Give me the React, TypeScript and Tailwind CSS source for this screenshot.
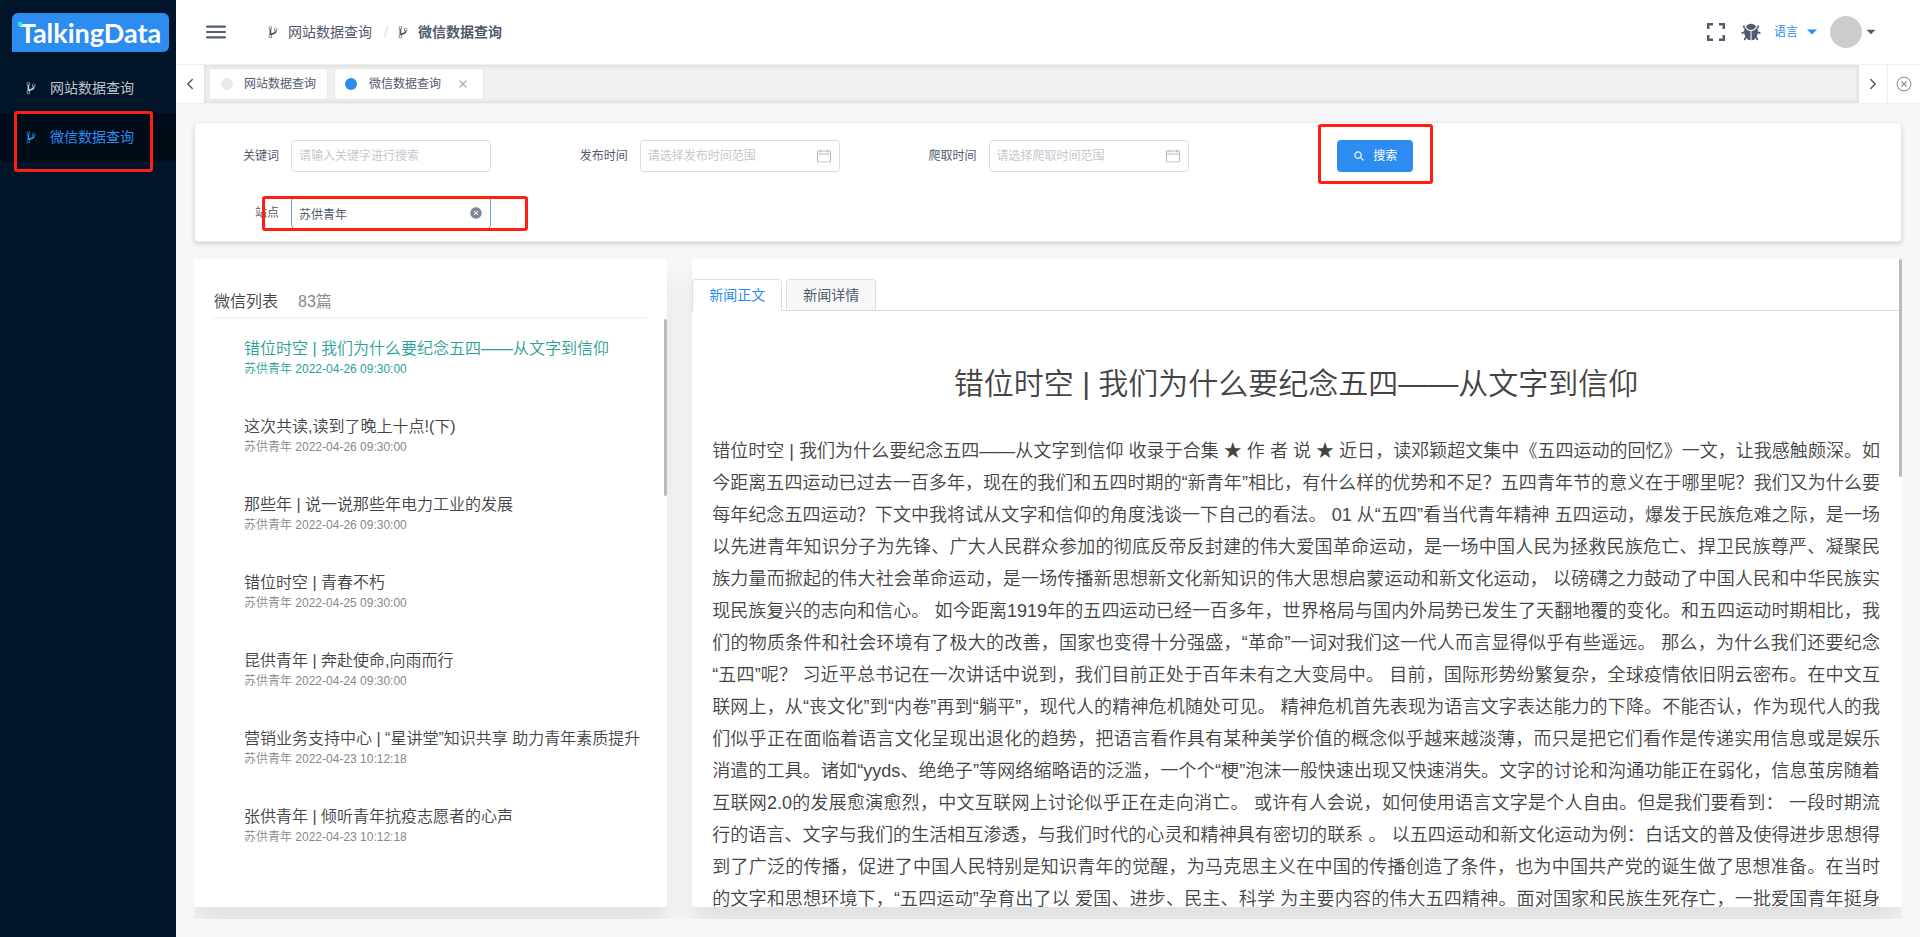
import { useState } from "react";
import {
    IoIosArrowBack,
    IoIosArrowForward,
    IoIosBug,
    IoIosCloseCircle,
    IoIosCloseCircleOutline,
    IoIosClose,
    IoIosSearch,
    IoMdArrowDropdown,
    IoMdExpand,
    IoMdGitBranch,
    IoMdMenu,
} from "react-icons/io";

const articles = [
    { title: "错位时空 | 我们为什么要纪念五四——从文字到信仰", time: "2022-04-26 09:30:00" },
    { title: "这次共读,读到了晚上十点!(下)", time: "2022-04-26 09:30:00" },
    { title: "那些年 | 说一说那些年电力工业的发展", time: "2022-04-26 09:30:00" },
    { title: "错位时空 | 青春不朽", time: "2022-04-25 09:30:00" },
    { title: "昆供青年 | 奔赴使命,向雨而行", time: "2022-04-24 09:30:00" },
    { title: "营销业务支持中心 | “星讲堂”知识共享 助力青年素质提升", time: "2022-04-23 10:12:18" },
    { title: "张供青年 | 倾听青年抗疫志愿者的心声", time: "2022-04-23 10:12:18" },
];

const content = [
    "错位时空 | 我们为什么要纪念五四——从文字到信仰 收录于合集 ★ 作 者 说 ★ 近日，读邓颖超文集中《五四运动的回忆》一文，让我感触颇深。如今距离五四运动已过去一百多年，现在的我们和五四时期的“新青年”相比，有什么样的优势和不足？五四青年节的意义在于哪里呢？我们又为什么要每年纪念五四运动？下文中我将试从文字和信仰的角度浅谈一下自己的看法。",
    "01 从“五四”看当代青年精神 五四运动，爆发于民族危难之际，是一场以先进青年知识分子为先锋、广大人民群众参加的彻底反帝反封建的伟大爱国革命运动，是一场中国人民为拯救民族危亡、捍卫民族尊严、凝聚民族力量而掀起的伟大社会革命运动，是一场传播新思想新文化新知识的伟大思想启蒙运动和新文化运动， 以磅礴之力鼓动了中国人民和中华民族实现民族复兴的志向和信心。",
    "如今距离1919年的五四运动已经一百多年，世界格局与国内外局势已发生了天翻地覆的变化。和五四运动时期相比，我们的物质条件和社会环境有了极大的改善，国家也变得十分强盛，“革命”一词对我们这一代人而言显得似乎有些遥远。",
    "那么，为什么我们还要纪念“五四”呢？ 习近平总书记在一次讲话中说到，我们目前正处于百年未有之大变局中。",
    "目前，国际形势纷繁复杂，全球疫情依旧阴云密布。在中文互联网上，从“丧文化”到“内卷”再到“躺平”，现代人的精神危机随处可见。",
    "精神危机首先表现为语言文字表达能力的下降。不能否认，作为现代人的我们似乎正在面临着语言文化呈现出退化的趋势，把语言看作具有某种美学价值的概念似乎越来越淡薄，而只是把它们看作是传递实用信息或是娱乐消遣的工具。诸如“yyds、绝绝子”等网络缩略语的泛滥，一个个“梗”泡沫一般快速出现又快速消失。文字的讨论和沟通功能正在弱化，信息茧房随着互联网2.0的发展愈演愈烈，中文互联网上讨论似乎正在走向消亡。",
    "或许有人会说，如何使用语言文字是个人自由。但是我们要看到： 一段时期流行的语言、文字与我们的生活相互渗透，与我们时代的心灵和精神具有密切的联系 。",
    "以五四运动和新文化运动为例：白话文的普及使得进步思想得到了广泛的传播，促进了中国人民特别是知识青年的觉醒，为马克思主义在中国的传播创造了条件，也为中国共产党的诞生做了思想准备。在当时的文字和思想环境下，“五四运动”孕育出了以 爱国、进步、民主、科学 为主要内容的伟大五四精神。面对国家和民族生死存亡，一批爱国青年挺身",
].join(" ");

function CalendarIcon() {
    return (
        <svg viewBox="0 0 14 13" className="h-[13px] w-[14px]" fill="none" stroke="currentColor">
            <path d="M.5 1.5h13v11H.5zM.5 4.5h13M3.5 0v3M10.5 0v3" />
        </svg>
    )
}

function Field({ id, label, placeholder, calendar }: { id: string; label: string; placeholder: string; calendar?: boolean }) {
    return (
        <div className="flex items-center">
            <label htmlFor={id} className="w-20 shrink-0 pr-3 text-right">{label}</label>
            <div className="relative w-[200px]">
                <input
                    id={id}
                    placeholder={placeholder}
                    className="block h-8 w-full rounded border border-[#dcdee2] bg-white px-[7px] outline-none placeholder:text-[#c5c8ce]"
                />
                {calendar && (
                    <span className="absolute top-1/2 right-[9px] -translate-y-1/2 text-[#b4b8c2]">
                        <CalendarIcon />
                    </span>
                )}
            </div>
        </div>
    )
}

function Sidebar() {
    return (
        <aside className="w-44 shrink-0 bg-[#001529]">
            <div className="flex h-16 pt-[13px] pl-3">
                <div className="relative flex h-[39px] w-[157px] items-center justify-center rounded-md rounded-bl-none bg-[#2d8cf0]">
                    <span className="absolute top-[9px] left-[6px] size-1 bg-[#2debc0]" />
                    <span className="font-['Lato',sans-serif] text-[27px] leading-none font-bold text-white">TalkingData</span>
                </div>
            </div>
            <nav className="text-sm">
                <a href="#site" className="flex h-[49px] items-center gap-3 pb-0.5 pl-6 text-white/75">
                    <IoMdGitBranch className="size-3.5" />
                    网站数据查询
                </a>
                <a href="#wechat" className="relative flex h-[49px] items-center gap-3 bg-[#000c17] pb-0.5 pl-6 text-[#2d8cf0]">
                    <IoMdGitBranch className="size-3.5" />
                    微信数据查询
                    <span className="absolute -top-0.5 left-3.5 h-[61px] w-[139px] rounded-[3px] border-3 border-[#ff1e0f]" />
                </a>
            </nav>
        </aside>
    )
}

function Header() {
    return (
        <header className="flex h-16 shrink-0 items-center justify-between bg-white pr-10 pl-[27px]">
            <div className="flex items-center">
                <button aria-label="菜单" className="mr-[37px]"><IoMdMenu className="size-[26px]" /></button>
                <nav className="flex items-center text-sm">
                    <a href="#site" className="flex items-center gap-2"><IoMdGitBranch className="size-3.5" />网站数据查询</a>
                    <span className="mr-2 ml-3 text-[#dcdee2]">/</span>
                    <a href="#wechat" className="flex items-center gap-2 font-bold"><IoMdGitBranch className="size-3.5" />微信数据查询</a>
                </nav>
            </div>
            <div className="flex items-center">
                <button aria-label="全屏"><IoMdExpand className="size-6" /></button>
                <button aria-label="错误日志" className="ml-3"><IoIosBug className="size-[22px]" /></button>
                <button className="ml-3 flex items-center gap-1 text-xs text-[#2d8cf0]">语言<IoMdArrowDropdown className="size-5" /></button>
                <button aria-label="用户" className="ml-2 flex items-center">
                    <span className="size-8 rounded-full bg-[#ccc]" />
                    <IoMdArrowDropdown className="size-[18px]" />
                </button>
            </div>
        </header>
    )
}

function TagsNav() {
    return (
        <div className="flex h-10 shrink-0 border-y border-[#f0f0f0] bg-white text-xs">
            <button aria-label="向左" className="flex w-7 items-center justify-center"><IoIosArrowBack className="size-4" /></button>
            <div className="flex flex-1 items-center gap-1.5 bg-[#f0f0f0] pl-[5px] shadow-[inset_0_0_3px_2px_rgba(100,100,100,0.1)]">
                <a href="#site" className="flex h-8 items-center rounded-[3px] border border-[#e8eaec] bg-white px-[11px]">
                    <span className="mr-[11px] size-3 rounded-full bg-[#e8eaec]" />
                    网站数据查询
                </a>
                <div className="flex h-8 items-center rounded-[3px] border border-[#e8eaec] bg-white px-[10px]">
                    <span className="mr-3 size-3 rounded-full bg-[#2d8cf0]" />
                    <a href="#wechat">微信数据查询</a>
                    <button aria-label="关闭" className="ml-3"><IoIosClose className="size-5 text-[#aaa]" /></button>
                </div>
            </div>
            <button aria-label="向右" className="flex w-7 items-center justify-center"><IoIosArrowForward className="size-4" /></button>
            <button aria-label="关闭全部" className="flex w-[33px] items-center justify-center border-l border-[#f0f0f0]"><IoIosCloseCircleOutline className="size-[18px] text-[#808695]" /></button>
        </div>
    )
}

function SearchForm() {
    const [site, setSite] = useState("苏供青年")
    return (
        <form
            onSubmit={(e) => e.preventDefault()}
            className="grid shrink-0 grid-cols-[5fr_5fr_5fr_9fr] gap-y-[25px] rounded border border-[#e8eaec] bg-white px-4 pt-[17px] pb-3 text-xs shadow-[0_2px_4px_rgba(0,0,0,0.14)]"
        >
            <Field id="keyword" label="关键词" placeholder="请输入关键字进行搜索" />
            <Field id="published" label="发布时间" placeholder="请选择发布时间范围" calendar />
            <Field id="crawled" label="爬取时间" placeholder="请选择爬取时间范围" calendar />
            <div className="pl-20">
                <div className="relative w-fit">
                    <button className="flex h-8 w-[76px] items-center justify-center gap-2 rounded bg-[#2d8cf0] text-white">
                        <IoIosSearch className="size-3 stroke-white stroke-[16px]" />搜索
                    </button>
                    <span className="pointer-events-none absolute -top-4 -left-[19px] h-[60px] w-[115px] rounded-[3px] border-3 border-[#ff1e0f]" />
                </div>
            </div>
            <div className="relative flex items-center">
                <label htmlFor="site" className="w-20 shrink-0 pr-3 text-right">站点</label>
                <div className="relative w-[200px]">
                    <input
                        id="site"
                        value={site}
                        onChange={(e) => setSite(e.target.value)}
                        className="block h-8 w-full rounded border border-[#57a3f3] bg-white px-[7px] outline-none"
                    />
                    <button type="button" aria-label="清空" onClick={() => setSite("")} className="absolute top-1/2 right-2 -translate-y-1/2">
                        <IoIosCloseCircle className="size-3.5 text-[#808695]" />
                    </button>
                </div>
                <span className="pointer-events-none absolute -top-px left-[51px] h-[35px] w-[266px] rounded-[3px] border-3 border-[#ff1e0f]" />
            </div>
        </form>
    )
}

function ArticleList() {
    const [active, setActive] = useState(0)
    return (
        <section className="relative mr-[25px] flex min-h-0 flex-col bg-white shadow-[0_20px_25px_rgba(0,0,0,0.09)]">
            <div className="mx-5 mt-[31px] flex h-[29px] items-start gap-5 border-b-2 border-[#f3f4f7] text-base font-[350]">
                <h2 className="text-[#444]">微信列表</h2>
                <span className="text-[#888]">83篇</span>
            </div>
            <ul className="min-h-0 flex-1 overflow-y-auto [scrollbar-width:none]">
                {articles.map(({ title, time }, i) => (
                    <li key={title} className="h-[78px] pt-[18px] pl-[50px]">
                        <button
                            onClick={() => setActive(i)}
                            className={i === active ? "text-left text-[#2aa198]" : "text-left text-[#444]"}
                        >
                            <span className="block text-base leading-6 font-[350] whitespace-nowrap">{title}</span>
                            <span className={i === active ? "block text-xs font-[350]" : "block text-xs font-[350] text-[#888]"}>苏供青年 {time}</span>
                        </button>
                    </li>
                ))}
            </ul>
            <span className="absolute top-[60px] right-0 h-[177px] w-[3px] rounded-xs bg-[#bbb]" />
        </section>
    )
}

function ArticleDetail() {
    return (
        <section className="relative min-h-0 bg-white shadow-[0_20px_25px_rgba(0,0,0,0.09)]">
            <div className="h-full overflow-y-auto [scrollbar-width:none]">
                <div role="tablist" className="mt-5 flex gap-1 border-b border-[#dcdee2] text-sm">
                    <button role="tab" aria-selected="true" className="-mb-px h-8 rounded-t border border-b-0 border-[#dcdee2] bg-white px-4 pb-0.5 text-[#2d8cf0]">新闻正文</button>
                    <button role="tab" aria-selected="false" className="h-[31px] rounded-t border border-b-0 border-[#dcdee2] bg-[#f8f8f9] px-4">新闻详情</button>
                </div>
                <article className="pr-[22px] pl-5 text-[#444]">
                    <h1 className="mt-[50px] text-center text-[30px] leading-[45px] font-[350]">{articles[0].title}</h1>
                    <p className="mt-[29px] text-justify text-lg leading-8 font-[350] [text-align-last:justify]">{content}</p>
                </article>
            </div>
            <span className="absolute top-0 right-0 h-[218px] w-[3px] rounded-xs bg-[#bbb]" />
        </section>
    )
}

export default function App() {
    return (
        <div lang="zh-CN" className="flex h-screen bg-[#f5f7f9] font-['Liberation_Sans','Noto_Sans_CJK_SC',sans-serif] text-[#515a6e]">
            <Sidebar />
            <div className="flex min-w-0 flex-1 flex-col">
                <Header />
                <TagsNav />
                <main className="flex min-h-0 flex-1 flex-col gap-[17px] p-[18px]">
                    <SearchForm />
                    <div className="grid min-h-0 flex-1 grid-cols-[7fr_17fr] grid-rows-[minmax(0,1fr)] overflow-hidden pb-3">
                        <ArticleList />
                        <ArticleDetail />
                    </div>
                </main>
            </div>
        </div>
    )
}
